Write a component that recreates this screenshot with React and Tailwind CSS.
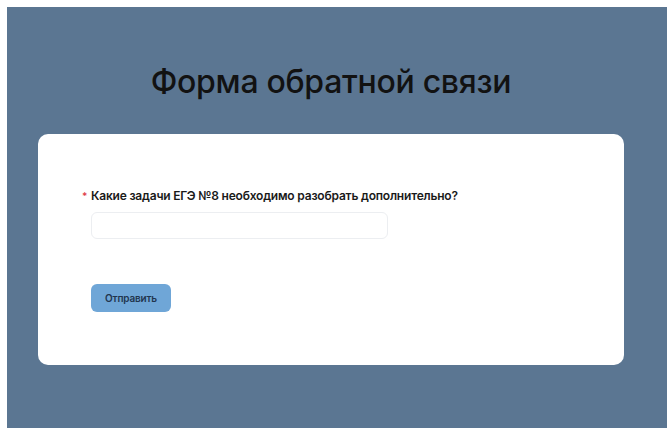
export default function App() {
  return (
    <div className="w-[668px] h-[428px] bg-white pt-[7px] pl-[7px] pr-px overflow-hidden" style={{ fontFamily: 'Inter, "Noto Sans", sans-serif' }}>
      <div className="h-full bg-[#5b7692]">
        <div className="ml-[31px] w-[586px]">
          {/* page heading */}
          <h1 className="pt-[55px] h-[127px] text-center text-[32px] leading-[40px] font-medium tracking-[-0.3px] text-[#121212]">
            Форма обратной связи
          </h1>

          {/* form card */}
          <div className="h-[231px] rounded-[10px] bg-white pl-[53px] pt-[54px]">
            <label className="flex items-baseline text-[12px] leading-[16px] font-semibold tracking-[-0.2px] text-[#1a1a1a]">
              <span className="-ml-[9px] w-[9px] text-[10px] text-[#e0404a]">*</span>
              Какие задачи ЕГЭ №8 необходимо разобрать дополнительно?
            </label>
            <input
              type="text"
              className="mt-[8px] block h-[27px] w-[297px] rounded-[6px] border border-[#eceef1] bg-white outline-none"
            />
            <button className="mt-[45px] block h-[28px] w-[80px] rounded-[6px] bg-[#6fa6d7] text-[10px] font-semibold tracking-[-0.2px] text-[#22354f]">
              Отправить
            </button>
          </div>
        </div>
      </div>
    </div>
  );
}
